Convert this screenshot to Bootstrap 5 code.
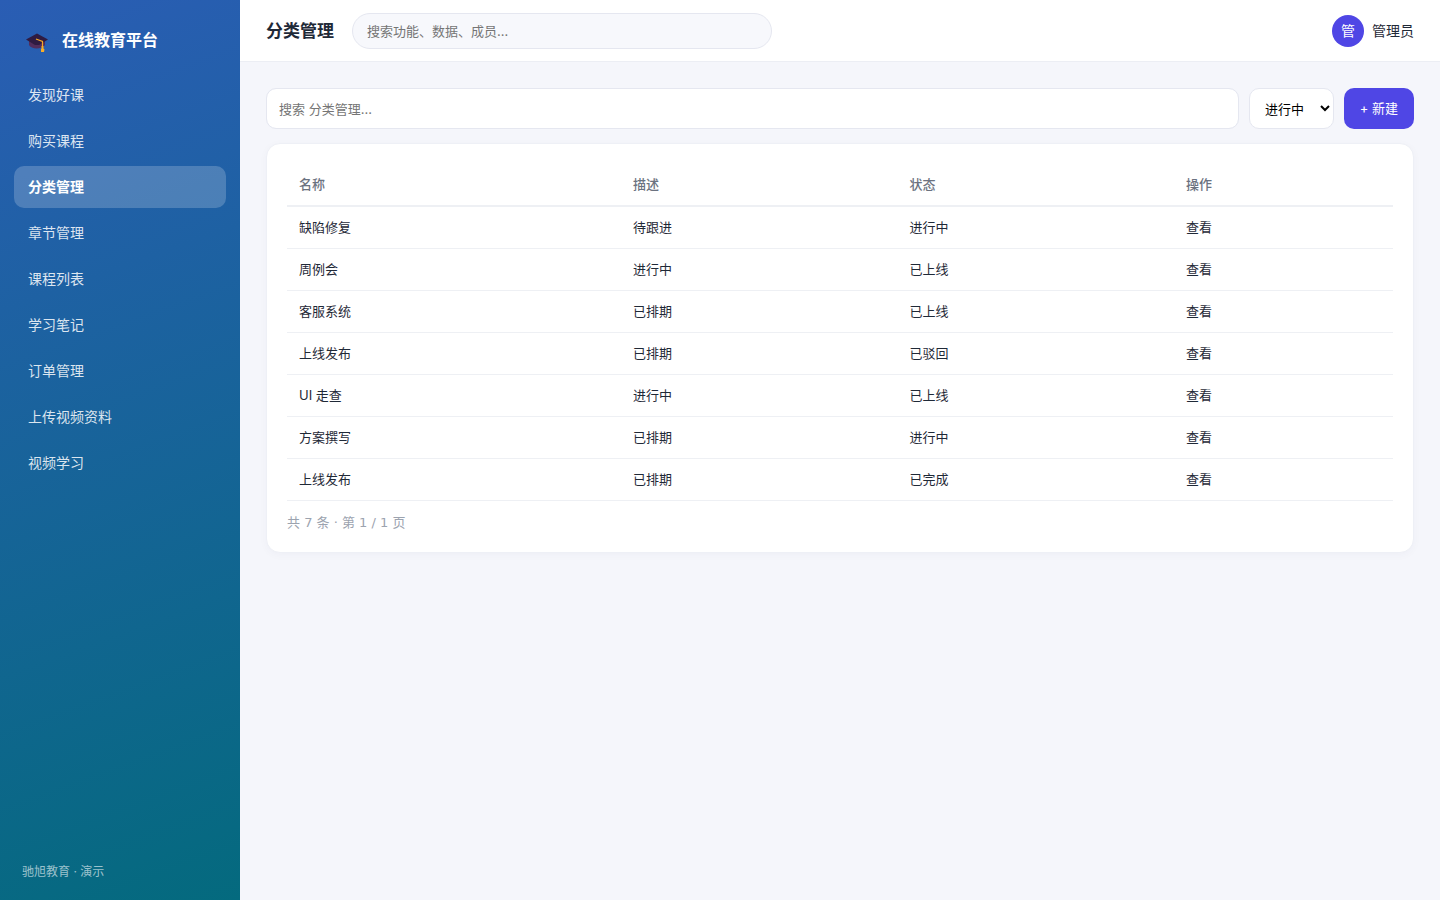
<!DOCTYPE html>
<html lang="zh-CN">
<head>
<meta charset="utf-8">
<meta name="viewport" content="width=device-width, initial-scale=1">
<title>分类管理 - 在线教育平台</title>
<link href="https://cdn.jsdelivr.net/npm/bootstrap@5.3.0/dist/css/bootstrap.min.css" rel="stylesheet">
<style>
  :root { --brand: #4f46e5; --line: #e5e7f0; --ink: #1f2937; }
  body { font-family: Inter, "Noto Sans CJK SC", sans-serif; font-size: 14px; line-height: 22px; color: var(--ink); background: #f5f6fb; }
  .sidebar { width: 240px; padding: 22px 14px 18px; background: linear-gradient(160deg, #2a5db4, #046a7e); }
  .brand { height: 36px; padding: 0 10px; gap: 12px; font-size: 16px; color: #fff; margin-bottom: 16px; }
  .side-link { height: 42px; padding: 0 14px; border-radius: 10px; color: rgba(255,255,255,.85); }
  .side-link:hover { color: #fff; }
  .side-link.active { background: rgba(255,255,255,.2); color: #fff; font-weight: 700; }
  .side-foot { padding: 0 8px; font-size: 12px; line-height: 20px; color: rgba(255,255,255,.6); }
  .topbar { height: 62px; padding: 0 26px; gap: 18px; border-bottom: 1px solid #eceef4; }
  .topbar h1 { font-size: 17px; line-height: 26px; }
  .top-search { width: 420px; height: 36px; padding: 0 14px; font-size: 13px; border-color: var(--line); background: #f7f8fc; }
  .form-control::placeholder { color: #757575; }
  .avatar { width: 32px; height: 32px; background: var(--brand); }
  .page-body { padding: 26px; }
  .tools { gap: 10px; margin-bottom: 14px; }
  .tools > * { height: 41px; font-size: 13px; border-radius: 10px; border-color: var(--line); }
  .filter-input { padding: 0 12px; }
  .filter-select { width: 85px; border: 1px solid var(--line); padding: 0 0 0 11px; background: #fff; color: #000; }
  .btn-create { width: 70px; padding: 0; background: var(--brand); color: #fff; border: 0; white-space: nowrap; }
  .btn-create:hover { background: #4338ca; color: #fff; }
  .panel { padding: 20px 20px 19px; border-color: #eef0f6; border-radius: 14px; box-shadow: 0 2px 8px rgba(30,40,90,.03); }
  .grid-table { font-size: 13px; line-height: 21px; color: var(--ink); --bs-table-color: var(--ink); }
  .grid-table th, .grid-table td { padding: 10px 12px; border-bottom: 1px solid #eef0f4; }
  .grid-table th { border-bottom-width: 2px; color: #6b7280; font-weight: 500; }
  .grid-table a { color: inherit; }
  .pager-note { margin-top: 12px; font-family: "DejaVu Sans", "Noto Sans CJK SC", sans-serif; font-size: 13px; line-height: 20px; color: #9ca3af; }
</style>
</head>
<body>
<div class="d-flex min-vh-100">
  <aside class="sidebar d-flex flex-column flex-shrink-0">
    <div class="brand d-flex align-items-center fw-bold">
      <svg width="26" height="26" viewBox="0 0 26 26" aria-hidden="true">
        <path d="M5 13v5c2 4.500 13 4.500 16 0v-5z" fill="#512d5c"/>
        <path d="M2 12.500 13 6.500l11 6-9 5.500h-4z" fill="#2f1b42"/>
        <path d="m12 12 6.500 2.500V20" fill="none" stroke="#f7a928" stroke-width="1.200"/>
        <path d="M17.500 19h2v2.500l1 1-.500 2.500h-3v-3l.500-.500z" fill="#f9ae27"/>
      </svg>
      <span>在线教育平台</span>
    </div>
    <nav class="nav flex-column gap-1">
      <a class="side-link nav-link d-flex align-items-center" href="#">发现好课</a>
      <a class="side-link nav-link d-flex align-items-center" href="#">购买课程</a>
      <a class="side-link nav-link d-flex align-items-center active" aria-current="page" href="#">分类管理</a>
      <a class="side-link nav-link d-flex align-items-center" href="#">章节管理</a>
      <a class="side-link nav-link d-flex align-items-center" href="#">课程列表</a>
      <a class="side-link nav-link d-flex align-items-center" href="#">学习笔记</a>
      <a class="side-link nav-link d-flex align-items-center" href="#">订单管理</a>
      <a class="side-link nav-link d-flex align-items-center" href="#">上传视频资料</a>
      <a class="side-link nav-link d-flex align-items-center" href="#">视频学习</a>
    </nav>
    <div class="side-foot mt-auto">驰旭教育 · 演示</div>
  </aside>
  <div class="flex-grow-1">
    <header class="topbar d-flex align-items-center bg-white">
      <h1 class="m-0 fw-bold">分类管理</h1>
      <input type="search" class="form-control top-search rounded-pill" placeholder="搜索功能、数据、成员…" aria-label="全局搜索">
      <div class="ms-auto d-flex align-items-center gap-2">
        <span class="avatar rounded-circle text-white d-flex align-items-center justify-content-center">管</span>
        <span>管理员</span>
      </div>
    </header>
    <main class="page-body">
      <div class="tools d-flex">
        <input type="search" class="form-control filter-input" placeholder="搜索 分类管理..." aria-label="搜索分类">
        <select class="filter-select flex-shrink-0" aria-label="状态">
          <option>进行中</option><option>已上线</option><option>已完成</option><option>已驳回</option>
        </select>
        <button type="button" class="btn btn-create flex-shrink-0">+ 新建</button>
      </div>
      <section class="card panel">
        <table class="table grid-table mb-0">
          <colgroup><col style="width:30.2%"><col style="width:25%"><col style="width:25%"><col></colgroup>
          <thead><tr><th>名称</th><th>描述</th><th>状态</th><th>操作</th></tr></thead>
          <tbody>
            <tr><td>缺陷修复</td><td>待跟进</td><td>进行中</td><td><a class="text-decoration-none" href="#">查看</a></td></tr>
            <tr><td>周例会</td><td>进行中</td><td>已上线</td><td><a class="text-decoration-none" href="#">查看</a></td></tr>
            <tr><td>客服系统</td><td>已排期</td><td>已上线</td><td><a class="text-decoration-none" href="#">查看</a></td></tr>
            <tr><td>上线发布</td><td>已排期</td><td>已驳回</td><td><a class="text-decoration-none" href="#">查看</a></td></tr>
            <tr><td>UI 走查</td><td>进行中</td><td>已上线</td><td><a class="text-decoration-none" href="#">查看</a></td></tr>
            <tr><td>方案撰写</td><td>已排期</td><td>进行中</td><td><a class="text-decoration-none" href="#">查看</a></td></tr>
            <tr><td>上线发布</td><td>已排期</td><td>已完成</td><td><a class="text-decoration-none" href="#">查看</a></td></tr>
          </tbody>
        </table>
        <div class="pager-note">共 7 条 · 第 1 / 1 页</div>
      </section>
    </main>
  </div>
</div>
<script src="https://cdn.jsdelivr.net/npm/bootstrap@5.3.0/dist/js/bootstrap.bundle.min.js"></script>
</body>
</html>
